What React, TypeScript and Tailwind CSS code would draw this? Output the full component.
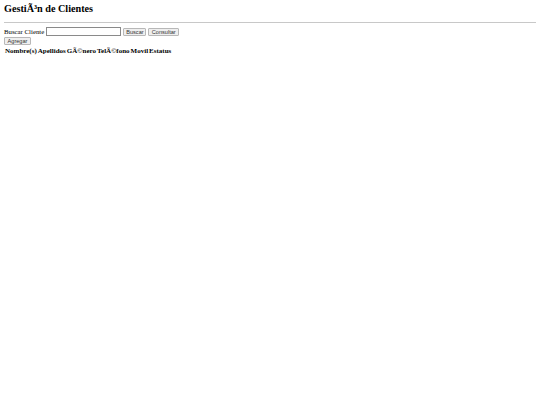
import React from "react";

const btn = "h-[8px] rounded-[1px] border border-[#b8b8b8] bg-[#efefef] px-[2px] text-[5.6px] leading-[6px] text-[#333]";
const sans = { fontFamily: '"Liberation Sans", sans-serif' };

export default function App() {
  return (
    <div className="min-h-[405px] bg-white px-[4px] pt-[3px] text-black" style={{ fontFamily: '"Liberation Serif", serif' }}>
      <h2 className="m-0 text-[10.2px] font-bold leading-[12px]">GestiÃ³n de Clientes</h2>
      <hr className="mt-[7px] mb-[4px] border-0 border-t border-[#c8c8c8]" />
      <div className="flex items-center text-[6.8px] leading-[9px]">
        <span>Buscar Cliente</span>
        <input type="text" className="ml-[2px] h-[9px] w-[75px] border border-[#8a8a8a] bg-white p-0" />
        <button className={`ml-[2px] w-[23px] ${btn}`} style={sans}>Buscar</button>
        <button className={`ml-[2px] w-[31px] ${btn}`} style={sans}>Consultar</button>
      </div>
      <div className="mt-[1px] flex">
        <button className={`w-[27px] ${btn}`} style={sans}>Agregar</button>
      </div>
      <table className="mt-[1px] border-separate border-spacing-x-[1px] border-spacing-y-[1px] text-[7px] leading-[8px]">
        <thead>
          <tr className="font-bold">
            <th className="px-0">Nombre(s)</th>
            <th className="px-0">Apellidos</th>
            <th className="px-0">GÃ©nero</th>
            <th className="px-0">TelÃ©fono</th>
            <th className="px-0">Movil</th>
            <th className="px-0">Estatus</th>
          </tr>
        </thead>
      </table>
    </div>
  );
}
